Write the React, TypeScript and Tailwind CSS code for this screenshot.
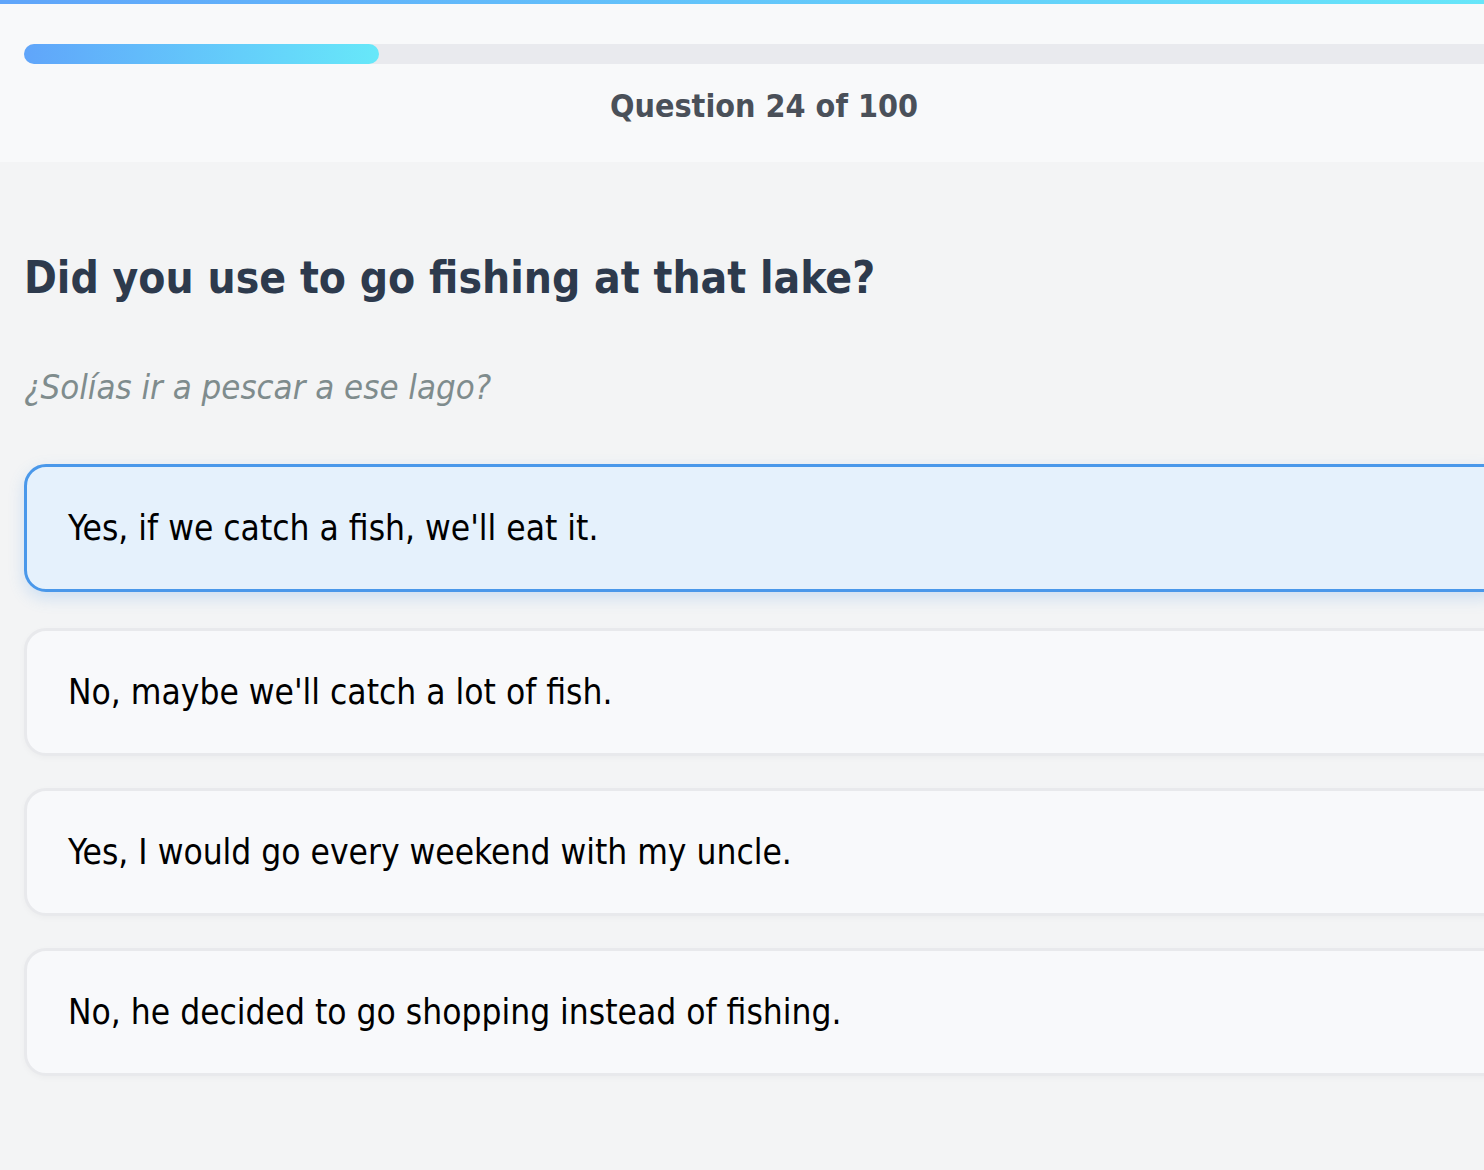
const options = [
  "Yes, if we catch a fish, we'll eat it.",
  "No, maybe we'll catch a lot of fish.",
  "Yes, I would go every weekend with my uncle.",
  "No, he decided to go shopping instead of fishing.",
];

export default function App() {
  const selected = 0;
  return (
    <div className="min-h-screen w-full overflow-hidden bg-[#f3f4f5] font-['DejaVu_Sans_Condensed','DejaVu_Sans',sans-serif] [font-stretch:condensed]">
      <div className="w-[1528px]">
        <div className="h-1 bg-gradient-to-r from-[#60a5fa] to-[#67e8f9]" />
        <div className="bg-[#f8f9fa] px-6 pt-10 pb-9">
          <div className="h-5 w-full rounded-full bg-[#e9eaee]">
            <div className="h-5 w-[24%] rounded-full bg-gradient-to-r from-[#60a5fa] to-[#67e8f9]" />
          </div>
          <div className="mt-[22px] text-center text-[32px] leading-10 font-bold text-[#4a5059]">
            Question 24 of 100
          </div>
        </div>

        <div className="px-6 pt-[89px]">
          <h1 className="text-[44px] leading-[54px] font-bold text-[#2d3a4d]">
            Did you use to go fishing at that lake?
          </h1>
          <p className="mt-[62px] text-[34.5px] leading-10 italic text-[#7f8c8d]">
            ¿Solías ir a pescar a ese lago?
          </p>

          <div className="mt-[61px] flex flex-col gap-8">
            {options.map((opt, i) =>
              i === selected ? (
                <div
                  key={i}
                  className="-translate-y-1 flex h-32 items-center rounded-[22px] border-[3px] border-[#4a98ea] bg-[#e5f1fc] px-[41px] text-[35px] text-black shadow-[0_6px_16px_rgba(74,152,234,0.22)]"
                >
                  {opt}
                </div>
              ) : (
                <div
                  key={i}
                  className="flex h-32 items-center rounded-[22px] border-[3px] border-[#e8e9ec] bg-[#f8f9fb] px-[41px] text-[35px] text-black shadow-[0_2px_6px_rgba(0,0,0,0.03)]"
                >
                  {opt}
                </div>
              )
            )}
          </div>
        </div>
      </div>
    </div>
  );
}
